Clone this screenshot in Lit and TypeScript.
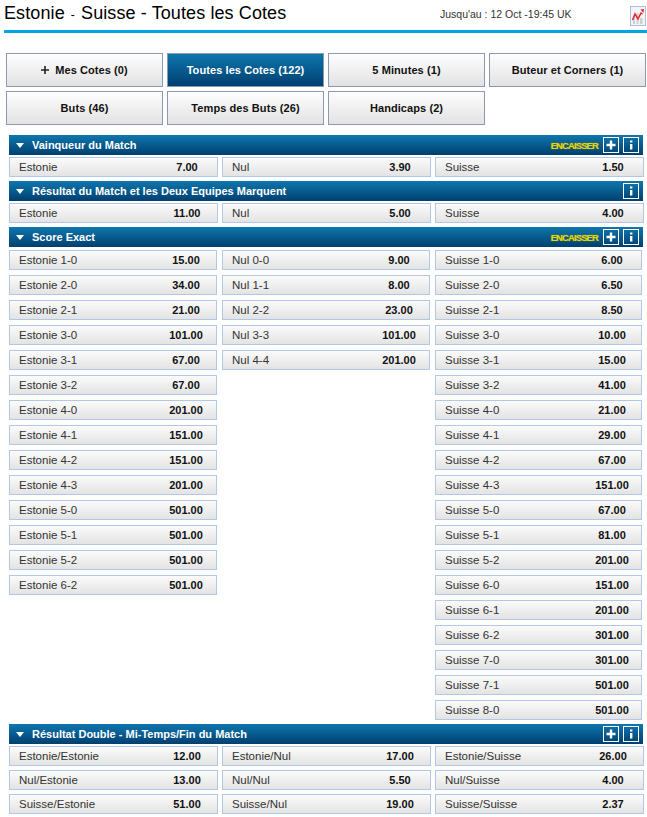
import { LitElement, html, css } from "lit";
import { customElement } from "lit/decorators.js";

type Row = [string, string];
const tabs = [
  ["Mes Cotes (0)", "plus"], ["Toutes les Cotes (122)", "on"], ["5 Minutes (1)", ""], ["Buteur et Corners (1)", ""],
  ["Buts (46)", ""], ["Temps des Buts (26)", ""], ["Handicaps (2)", ""],
];
const parse = (s: string): Row[] => s.split("|").map((x) => { const i = x.lastIndexOf(" "); return [x.slice(0, i), x.slice(i + 1)] as Row; });
const est = parse("Estonie 1-0 15.00|Estonie 2-0 34.00|Estonie 2-1 21.00|Estonie 3-0 101.00|Estonie 3-1 67.00|Estonie 3-2 67.00|Estonie 4-0 201.00|Estonie 4-1 151.00|Estonie 4-2 151.00|Estonie 4-3 201.00|Estonie 5-0 501.00|Estonie 5-1 501.00|Estonie 5-2 501.00|Estonie 6-2 501.00");
const nul = parse("Nul 0-0 9.00|Nul 1-1 8.00|Nul 2-2 23.00|Nul 3-3 101.00|Nul 4-4 201.00");
const sui = parse("Suisse 1-0 6.00|Suisse 2-0 6.50|Suisse 2-1 8.50|Suisse 3-0 10.00|Suisse 3-1 15.00|Suisse 3-2 41.00|Suisse 4-0 21.00|Suisse 4-1 29.00|Suisse 4-2 67.00|Suisse 4-3 151.00|Suisse 5-0 67.00|Suisse 5-1 81.00|Suisse 5-2 201.00|Suisse 6-0 151.00|Suisse 6-1 201.00|Suisse 6-2 301.00|Suisse 7-0 301.00|Suisse 7-1 501.00|Suisse 8-0 501.00");
const win = parse("Estonie 7.00|Nul 3.90|Suisse 1.50");
const both = parse("Estonie 11.00|Nul 5.00|Suisse 4.00");
const dbl = parse("Estonie/Estonie 12.00|Estonie/Nul 17.00|Estonie/Suisse 26.00|Nul/Estonie 13.00|Nul/Nul 5.50|Nul/Suisse 4.00|Suisse/Estonie 51.00|Suisse/Nul 19.00|Suisse/Suisse 2.37");

@customElement("app-root")
export class AppRoot extends LitElement {
  static styles = css`
    :host { display: block; width: 647px; height: 817px; overflow: hidden; background: #fff; font-family: "Liberation Sans", Arial, sans-serif; color: #111; font-size: 11px; }
    .top { margin-left: 4px; height: 30px; border-bottom: 3px solid #00a5e3; display: flex; align-items: center; box-sizing: content-box; }
    .title { font-size: 18px; color: #000; flex: none; width: 436px; line-height: 28px; margin-bottom: 2px; white-space: nowrap; letter-spacing: 0.1px; }
    .title small { font-size: 12px; margin: 0 1px; }
    .until { font-size: 10.5px; color: #333; width: 190px; white-space: nowrap; margin-bottom: 3px; }
    .chart { width: 16px; height: 20px; display: block; margin-top: 1px; }
    .tabs { display: grid; grid-template-columns: repeat(4, 157px); gap: 4px; margin: 20px 0 0 6px; }
    .tab { box-sizing: border-box; height: 34px; border: 1px solid #8b9ab4; background: linear-gradient(#fefefe, #e2e2e2); display: flex; align-items: center; justify-content: center; font-weight: bold; color: #111; gap: 6px; letter-spacing: 0.08px; }
    .tab.on { background: linear-gradient(#0e76ad, #003f70); color: #fff; }
    .tab svg { width: 8px; height: 8px; margin-top: -1px; }
    .market { margin: 10px 0 0 9px; width: 634px; }
    .head { height: 20px; background: linear-gradient(#0f77ae, #003f6f); display: flex; align-items: center; color: #fff; font-weight: bold; padding: 0 4px 0 7px; box-sizing: border-box; }
    .tri { width: 0; height: 0; border-left: 4px solid transparent; border-right: 4px solid transparent; border-top: 5px solid #fff; margin-right: 8px; }
    .name { flex: 1; }
    .cash { font-size: 9.5px; letter-spacing: -0.9px; color: #e3d40e; margin-right: 1px; text-shadow: 0 0 1px #b5a90a; }
    .btn { box-sizing: border-box; width: 16px; height: 16px; border: 1px solid #fff; margin-left: 4px; display: block; }
    .grid { display: grid; grid-template-columns: repeat(3, 209px); column-gap: 4px; row-gap: 4px; margin-top: 2px; }
    .cols { display: flex; gap: 5px; margin-top: 3px; align-items: flex-start; }
    .col { width: 208px; display: flex; flex-direction: column; gap: 5px; }
    .col:last-child { width: 207px; }
    .row { box-sizing: border-box; height: 20px; border: 1px solid #b3c7e6; background: linear-gradient(#fbfbfb, #e3e3e3); display: flex; align-items: center; padding-left: 9px; color: #333; white-space: nowrap; font-size: 11.5px; }
    .row .l { flex: 1; }
    .row .o { width: 60px; text-align: center; font-weight: bold; color: #111; font-size: 11px; }
    .col:last-child .row .o { margin-right: -1px; }
    .gap0 { margin-top: 4px; }
  `;

  row(r: Row) { return html`<div class="row"><span class="l">${r[0]}</span><span class="o">${r[1]}</span></div>`; }

  head(name: string, cash: boolean, plus = cash) {
    return html`<div class="head"><span class="tri"></span><span class="name">${name}</span>
      ${cash ? html`<span class="cash">ENCAISSER</span>` : ""}
      ${plus ? html`<svg class="btn" viewBox="0 0 14 14"><path d="M7 2.500v9M2.500 7h9" stroke="#fff" stroke-width="2.400" fill="none"/></svg>` : ""}
      <svg class="btn" viewBox="0 0 14 14"><path d="M6 2.500h2.400v2H6zM6 6h2.400v5.500H6z" fill="#fff"/></svg></div>`;
  }

  render() {
    return html`
      <div class="top">
        <div class="title">Estonie <small>-</small> Suisse - Toutes les Cotes</div>
        <div class="until">Jusqu'au : 12 Oct -19:45 UK</div>
        <svg class="chart" viewBox="0 0 16 20">
          <rect x=".5" y=".5" width="15" height="19" fill="#f4f4f4" stroke="#a9c0e0"/>
          <path d="M3 10h2v8H3zM6.500 7h2v11h-2zM10 12h2.500v6H10z" fill="#cfcfcf"/>
          <path d="M2.500 14 5 8l3 5 3-6 1.500 1" fill="none" stroke="#e0262c" stroke-width="1.500"/>
          <path d="M10.500 3.500 14 3l-.5 4z" fill="#e0262c"/>
        </svg>
      </div>
      <div class="tabs">
        ${tabs.map(([t, k]) => html`<div class="tab ${k === "on" ? "on" : ""}">${k === "plus"
          ? html`<svg viewBox="0 0 9 9"><path d="M4.500 0v9M0 4.500h9" stroke="#222" stroke-width="1.800" fill="none"/></svg>` : ""}${t}</div>`)}
      </div>
      <div class="market">${this.head("Vainqueur du Match", true)}<div class="grid">${win.map((r) => this.row(r))}</div></div>
      <div class="market gap0">${this.head("Résultat du Match et les Deux Equipes Marquent", false)}<div class="grid">${both.map((r) => this.row(r))}</div></div>
      <div class="market gap0">${this.head("Score Exact", true)}
        <div class="cols">${[est, nul, sui].map((c) => html`<div class="col">${c.map((r) => this.row(r))}</div>`)}</div></div>
      <div class="market gap0">${this.head("Résultat Double - Mi-Temps/Fin du Match", false, true)}<div class="grid">${dbl.map((r) => this.row(r))}</div></div>
    `;
  }
}
